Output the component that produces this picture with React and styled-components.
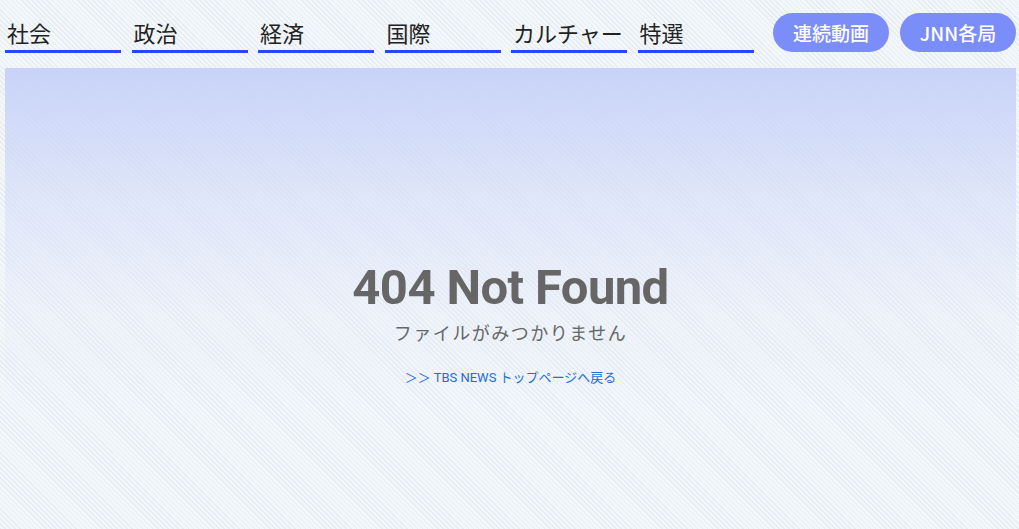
import styled, { createGlobalStyle } from 'styled-components'

const GlobalStyle = createGlobalStyle`
  html, body {
    margin: 0;
    padding: 0;
  }
  body {
    font-family: "Noto Sans CJK JP", "Noto Sans", sans-serif;
    background-color: #f4f7fa;
    background-image: repeating-linear-gradient(
      45deg,
      transparent 0px,
      transparent 2.5px,
      rgba(205, 215, 230, 0.35) 2.5px,
      rgba(205, 215, 230, 0.35) 3.6px
    );
    min-height: 529px;
    overflow: hidden;
  }
`

const navItems = ['社会', '政治', '経済', '国際', 'カルチャー', '特選']
const buttons = ['連続動画', 'JNN各局']

const Header = styled.header`
  display: flex;
  align-items: flex-end;
  padding: 13px 3px 0 5px;
  margin-bottom: 15px;
`

const Nav = styled.nav`
  display: flex;
  gap: 10.5px;
`

const NavItem = styled.a`
  display: block;
  width: 116px;
  box-sizing: border-box;
  padding: 0 2px 2px;
  font-size: 22px;
  line-height: 32px;
  color: #222;
  text-decoration: none;
  border-bottom: 3px solid #2a44ff;
`

const Buttons = styled.div`
  display: flex;
  gap: 11px;
  margin-left: auto;
  margin-bottom: 1px;
`

const PillButton = styled.a`
  display: flex;
  align-items: center;
  justify-content: center;
  width: 116px;
  height: 39px;
  border-radius: 20px;
  background: #7b8df8;
  color: #fff;
  font-size: 19px;
  font-weight: 500;
  text-decoration: none;
`

const Panel = styled.main`
  margin: 0 3px 0 5px;
  height: 470px;
  padding-top: 190px;
  box-sizing: border-box;
  text-align: center;
  background: linear-gradient(
    to bottom,
    rgba(196, 207, 248, 0.9) 0px,
    rgba(210, 220, 248, 0.6) 130px,
    rgba(225, 232, 250, 0.3) 240px,
    rgba(235, 240, 250, 0) 360px
  );
`

const Title = styled.h1`
  margin: 0;
  font-family: Roboto, "Liberation Sans", sans-serif;
  font-size: 49px;
  font-weight: 700;
  line-height: 60px;
  letter-spacing: -0.6px;
  color: #666;
`

const Subtitle = styled.p`
  margin: 1px 0 0;
  font-size: 18px;
  line-height: 26px;
  letter-spacing: 1.5px;
  color: #666;
`

const BackLink = styled.a`
  display: inline-block;
  margin-top: 24px;
  font-family: Roboto, "Noto Sans CJK JP", sans-serif;
  font-size: 13px;
  line-height: 18px;
  color: #1a6fd8;
  text-decoration: none;
`

export default function App() {
  return (
    <>
      <GlobalStyle />
      <Header>
        <Nav>
          {navItems.map((item) => (
            <NavItem key={item} href="#">{item}</NavItem>
          ))}
        </Nav>
        <Buttons>
          {buttons.map((b) => (
            <PillButton key={b} href="#">{b}</PillButton>
          ))}
        </Buttons>
      </Header>
      <Panel>
        <Title>404 Not Found</Title>
        <Subtitle>ファイルがみつかりません</Subtitle>
        <BackLink href="#">＞＞ TBS NEWS トップページへ戻る</BackLink>
      </Panel>
    </>
  )
}
